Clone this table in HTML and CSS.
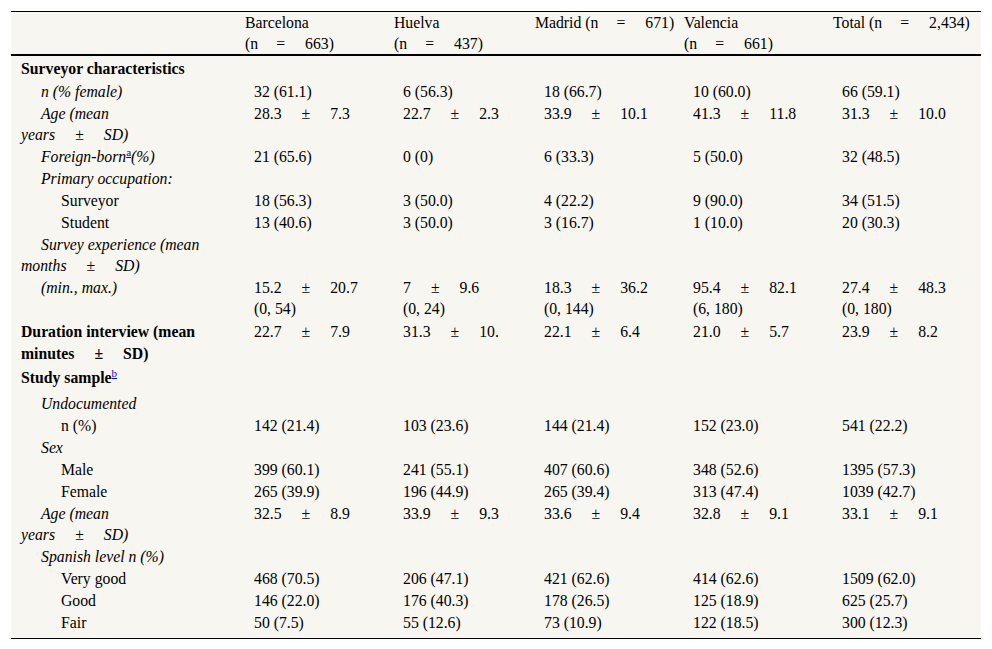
FILE: index.html
```html
<!DOCTYPE html>
<html lang="en">
<head>
<meta charset="utf-8">
<title>Table</title>
<link rel="stylesheet" href="styles.css">
</head>
<body>
<table class="tbl">
  <colgroup>
    <col class="c1"><col class="c2"><col class="c3"><col class="c4"><col class="c5"><col class="c6">
  </colgroup>
  <thead>
    <tr>
      <th></th>
      <th>Barcelona <span class="grp">(n<span class="eq">=</span>663)</span></th>
      <th>Huelva <span class="grp">(n<span class="eq">=</span>437)</span></th>
      <th class="nowrap">Madrid <span class="grp">(n<span class="eq">=</span>671)</span></th>
      <th>Valencia <span class="grp">(n<span class="eq">=</span>661)</span></th>
      <th>Total <span class="grp">(n<span class="eq">=</span>2,434)</span></th>
    </tr>
  </thead>
  <tbody>
    <tr class="head"><td>Surveyor characteristics</td><td></td><td></td><td></td><td></td><td></td></tr>
    <tr><td class="i1 it">n (% female)</td><td>32 (61.1)</td><td>6 (56.3)</td><td>18 (66.7)</td><td>10 (60.0)</td><td>66 (59.1)</td></tr>
    <tr><td class="i1 it">Age (mean <span class="grp">years<span class="pm">±</span>SD)</span></td><td>28.3<span class="pm">±</span>7.3</td><td>22.7<span class="pm">±</span>2.3</td><td>33.9<span class="pm">±</span>10.1</td><td>41.3<span class="pm">±</span>11.8</td><td>31.3<span class="pm">±</span>10.0</td></tr>
    <tr><td class="i1 it">Foreign-born<sup><a href="#a">a</a></sup>(%)</td><td>21 (65.6)</td><td>0 (0)</td><td>6 (33.3)</td><td>5 (50.0)</td><td>32 (48.5)</td></tr>
    <tr><td class="i1 it">Primary occupation:</td><td></td><td></td><td></td><td></td><td></td></tr>
    <tr><td class="i2">Surveyor</td><td>18 (56.3)</td><td>3 (50.0)</td><td>4 (22.2)</td><td>9 (90.0)</td><td>34 (51.5)</td></tr>
    <tr><td class="i2">Student</td><td>13 (40.6)</td><td>3 (50.0)</td><td>3 (16.7)</td><td>1 (10.0)</td><td>20 (30.3)</td></tr>
    <tr><td class="i1 it">Survey experience (mean <span class="grp">months<span class="pm">±</span>SD)</span></td><td></td><td></td><td></td><td></td><td></td></tr>
    <tr><td class="i1 it">(min., max.)</td><td>15.2<span class="pm">±</span>20.7 <span class="grp">(0, 54)</span></td><td>7<span class="pm">±</span>9.6 <span class="grp">(0, 24)</span></td><td>18.3<span class="pm">±</span>36.2 <span class="grp">(0, 144)</span></td><td>95.4<span class="pm">±</span>82.1 <span class="grp">(6, 180)</span></td><td>27.4<span class="pm">±</span>48.3 <span class="grp">(0, 180)</span></td></tr>
    <tr class="head"><td>Duration interview (mean <span class="grp">minutes<span class="pm">±</span>SD)</span></td><td>22.7<span class="pm">±</span>7.9</td><td>31.3<span class="pm">±</span>10.</td><td>22.1<span class="pm">±</span>6.4</td><td>21.0<span class="pm">±</span>5.7</td><td>23.9<span class="pm">±</span>8.2</td></tr>
    <tr class="head tall"><td>Study sample<sup><a href="#b">b</a></sup></td><td></td><td></td><td></td><td></td><td></td></tr>
    <tr><td class="i1 it">Undocumented</td><td></td><td></td><td></td><td></td><td></td></tr>
    <tr><td class="i2">n (%)</td><td>142 (21.4)</td><td>103 (23.6)</td><td>144 (21.4)</td><td>152 (23.0)</td><td>541 (22.2)</td></tr>
    <tr><td class="i1 it">Sex</td><td></td><td></td><td></td><td></td><td></td></tr>
    <tr><td class="i2">Male</td><td>399 (60.1)</td><td>241 (55.1)</td><td>407 (60.6)</td><td>348 (52.6)</td><td>1395 (57.3)</td></tr>
    <tr><td class="i2">Female</td><td>265 (39.9)</td><td>196 (44.9)</td><td>265 (39.4)</td><td>313 (47.4)</td><td>1039 (42.7)</td></tr>
    <tr><td class="i1 it">Age (mean <span class="grp">years<span class="pm">±</span>SD)</span></td><td>32.5<span class="pm">±</span>8.9</td><td>33.9<span class="pm">±</span>9.3</td><td>33.6<span class="pm">±</span>9.4</td><td>32.8<span class="pm">±</span>9.1</td><td>33.1<span class="pm">±</span>9.1</td></tr>
    <tr><td class="i1 it">Spanish level n (%)</td><td></td><td></td><td></td><td></td><td></td></tr>
    <tr><td class="i2">Very good</td><td>468 (70.5)</td><td>206 (47.1)</td><td>421 (62.6)</td><td>414 (62.6)</td><td>1509 (62.0)</td></tr>
    <tr><td class="i2">Good</td><td>146 (22.0)</td><td>176 (40.3)</td><td>178 (26.5)</td><td>125 (18.9)</td><td>625 (25.7)</td></tr>
    <tr class="last"><td class="i2">Fair</td><td>50 (7.5)</td><td>55 (12.6)</td><td>73 (10.9)</td><td>122 (18.5)</td><td>300 (12.3)</td></tr>
  </tbody>
</table>
</body>
</html>
```

FILE: styles.css
```css
html, body {
  margin: 0;
  padding: 0;
  background: #ffffff;
}
body {
  padding: 11px 0 0 11px;
  font-family: "Liberation Serif", "Times New Roman", serif;
  font-size: 15.75px;
  color: #000;
}
.tbl {
  table-layout: fixed;
  width: 970px;
  border-collapse: collapse;
  background: #f8f6f0;
  border-top: 1px solid #000;
  border-bottom: 1px solid #000;
}
.c1 { width: 230px; }
.c2 { width: 149px; }
.c3 { width: 141px; }
.c4 { width: 149px; }
.c5 { width: 149px; }
.c6 { width: 152px; }
.tbl th {
  font-weight: normal;
  text-align: left;
  vertical-align: top;
  line-height: 21px;
  padding: 0 0 0 4px;
  border-bottom: 2px solid #000;
}
.tbl th.nowrap { white-space: nowrap; }
.tbl td {
  vertical-align: top;
  line-height: 21px;
  padding: 0.5px 8px 0.5px 13px;
}
.tbl td:first-child {
  padding-left: 10px;
  padding-right: 26px;
}
.grp { white-space: nowrap; }
.tbl td.it { font-style: italic; }
.tbl td.i1 { text-indent: 20px; }
.tbl td.i2 { text-indent: 40px; }
.tbl tr.head td { line-height: 22px; padding-top: 2px; padding-bottom: 0; }
.tbl tr.head td:first-child { font-weight: bold; }
.tbl tr.tall td { padding-bottom: 3px; }
.tbl tr.last td { padding-bottom: 5px; }
.eq { margin: 0 20px 0 18px; }
.pm { margin: 0 20px 0 20px; font-style: normal; }
sup {
  font-size: 11px;
  line-height: 0;
  vertical-align: 6px;
  font-weight: normal;
  font-style: normal;
}
sup a { color: #0000ee; text-decoration: underline; }
```
